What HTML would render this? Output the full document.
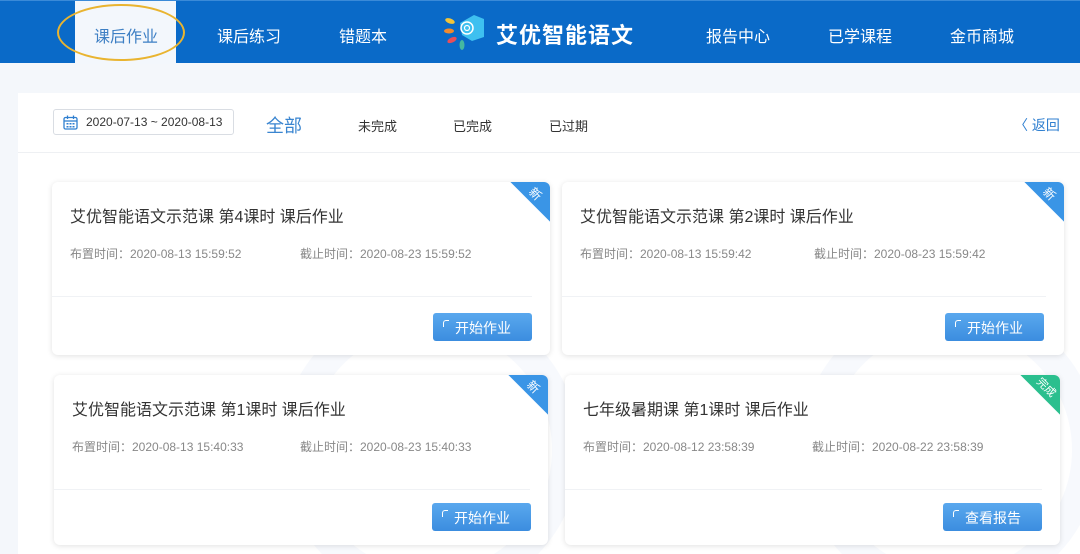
<!DOCTYPE html>
<html><head><meta charset="utf-8"><style>
*{margin:0;padding:0;box-sizing:border-box}
html,body{width:1080px;height:554px;overflow:hidden}
body{background:#f4f7fb;font-family:"Liberation Sans","Noto Sans CJK SC",sans-serif;position:relative}
.nav{position:absolute;left:0;top:0;width:1080px;height:63px;background:#0a6ac8;border-top:1px solid #3a8ad8}
.nav a{position:absolute;top:22px;color:#fff;font-size:16px}
.act{position:absolute;left:75px;top:0;width:101px;height:63px;background:#f3f7fc}
.ell{position:absolute;left:57px;top:3px;width:128px;height:57px;border:2px solid #e9b430;border-radius:50%}
.panel{position:absolute;left:18px;top:93px;width:1062px;height:461px;background:#fff;overflow:hidden}
.filter{position:absolute;left:0;top:0;width:1062px;height:60px;border-bottom:1px solid #eef0f3}
.f{position:absolute;font-size:13px;color:#333;top:23px}
.date{position:absolute;left:35px;top:16px;width:181px;height:26px;border:1px solid #d9dde3;border-radius:3px;font-size:12px;color:#333;padding:5px 0 0 32px}
.card{position:absolute;background:#fff;border-radius:6px;box-shadow:0 1px 6px rgba(0,0,0,.12);overflow:hidden}
.card .t{position:absolute;left:18px;top:21px;font-size:16px;color:#333}
.card .m{position:absolute;top:63px;font-size:12px;color:#888}
.card .d{position:absolute;left:0;right:18px;top:114px;border-top:1px solid #f0f2f5}
.btn{position:absolute;width:99px;height:28px;border-radius:3px;background:linear-gradient(#5aa8ee,#3b8ddf);color:#fff;font-size:14px;padding:5px 0 0 22px}
.btn:before{content:"";position:absolute;left:10px;top:7px;width:5px;height:6px;border-left:1px solid #fff;border-top:1px solid #fff;border-radius:3px 0 0 0}
.tag{position:absolute;right:-28px;top:-28px;width:56px;height:56px;transform:rotate(45deg);background:#3a95e6}
.tag span{position:absolute;left:20px;top:38px;font-size:12px;color:#fff}
.deco{position:absolute;border-radius:50%;border:28px solid #f7f9fd}
</style></head><body>
<div class="nav">
<div class="act"></div>
<a style="left:94px;color:#3d7fc4">课后作业</a>
<div class="ell"></div>
<a style="left:217px">课后练习</a>
<a style="left:339px">错题本</a>
<svg style="position:absolute;left:444px;top:10px" width="44" height="44" viewBox="0 0 44 44">
<ellipse cx="6" cy="10" rx="5" ry="2.5" fill="#f2c43a" transform="rotate(20 6 10)"/>
<ellipse cx="5" cy="20" rx="5" ry="2.5" fill="#f28a2e"/>
<ellipse cx="8" cy="29" rx="5" ry="2.5" fill="#e84e5a" transform="rotate(-25 8 29)"/>
<ellipse cx="18" cy="34" rx="2.5" ry="5" fill="#45b8a0"/>
<path d="M16 12 L30 4 L40 8 L40 26 L28 30 L18 24 Z" fill="#3ec0f0"/>
<circle cx="23" cy="17" r="6" fill="none" stroke="#fff" stroke-width="1.5"/>
<circle cx="23" cy="17" r="2.5" fill="none" stroke="#fff" stroke-width="1.2"/>
</svg>
<a style="left:496px;top:17px;font-size:22px;font-weight:bold;letter-spacing:1px">艾优智能语文</a>
<a style="left:706px">报告中心</a>
<a style="left:828px">已学课程</a>
<a style="left:950px">金币商城</a>
</div>
<div class="panel">
<div class="deco" style="left:262px;top:207px;width:300px;height:300px"></div>
<div class="deco" style="left:782px;top:207px;width:300px;height:300px"></div>
<div class="filter">
<div class="date"><svg style="position:absolute;left:9px;top:5px" width="15" height="15" viewBox="0 0 15 15"><rect x="1" y="2.5" width="13" height="11.5" rx="1.5" fill="none" stroke="#2f7fd0" stroke-width="1.3"/><line x1="1" y1="6" x2="14" y2="6" stroke="#2f7fd0" stroke-width="1.3"/><line x1="4.5" y1="0.5" x2="4.5" y2="4" stroke="#2f7fd0" stroke-width="1.3"/><line x1="10.5" y1="0.5" x2="10.5" y2="4" stroke="#2f7fd0" stroke-width="1.3"/><g fill="#2f7fd0"><rect x="3.5" y="8" width="2" height="1.5"/><rect x="6.5" y="8" width="2" height="1.5"/><rect x="9.5" y="8" width="2" height="1.5"/><rect x="3.5" y="11" width="2" height="1.5"/><rect x="6.5" y="11" width="2" height="1.5"/><rect x="9.5" y="11" width="2" height="1.5"/></g></svg>2020-07-13 ~ 2020-08-13</div>
<div class="f" style="left:248px;top:19px;font-size:18px;color:#3a85d0">全部</div>
<div class="f" style="left:340px">未完成</div>
<div class="f" style="left:435px">已完成</div>
<div class="f" style="left:531px">已过期</div>
<div class="f" style="left:996px;color:#2f7fd0;font-size:14px;top:22px">〈 返回</div>
</div>
</div>

<div class="card" style="left:52px;top:182px;width:498px;height:173px">
<div class="t">艾优智能语文示范课 第4课时 课后作业</div>
<div class="m" style="left:18px">布置时间：2020-08-13 15:59:52</div>
<div class="m" style="left:248px">截止时间：2020-08-23 15:59:52</div>
<div class="d"></div>
<div class="btn" style="left:381px;top:131px">开始作业</div>
<div class="tag"><span>新</span></div>
</div>
<div class="card" style="left:562px;top:182px;width:502px;height:173px">
<div class="t">艾优智能语文示范课 第2课时 课后作业</div>
<div class="m" style="left:18px">布置时间：2020-08-13 15:59:42</div>
<div class="m" style="left:252px">截止时间：2020-08-23 15:59:42</div>
<div class="d"></div>
<div class="btn" style="left:383px;top:131px">开始作业</div>
<div class="tag"><span>新</span></div>
</div>
<div class="card" style="left:54px;top:375px;width:494px;height:170px">
<div class="t">艾优智能语文示范课 第1课时 课后作业</div>
<div class="m" style="left:18px">布置时间：2020-08-13 15:40:33</div>
<div class="m" style="left:246px">截止时间：2020-08-23 15:40:33</div>
<div class="d"></div>
<div class="btn" style="left:378px;top:128px">开始作业</div>
<div class="tag"><span>新</span></div>
</div>
<div class="card" style="left:565px;top:375px;width:495px;height:170px">
<div class="t">七年级暑期课 第1课时 课后作业</div>
<div class="m" style="left:18px">布置时间：2020-08-12 23:58:39</div>
<div class="m" style="left:247px">截止时间：2020-08-22 23:58:39</div>
<div class="d"></div>
<div class="btn" style="left:378px;top:128px">查看报告</div>
<div class="tag" style="background:#2bbf8e"><span style="left:16px;font-size:11px">完成</span></div>
</div>
</body></html>
